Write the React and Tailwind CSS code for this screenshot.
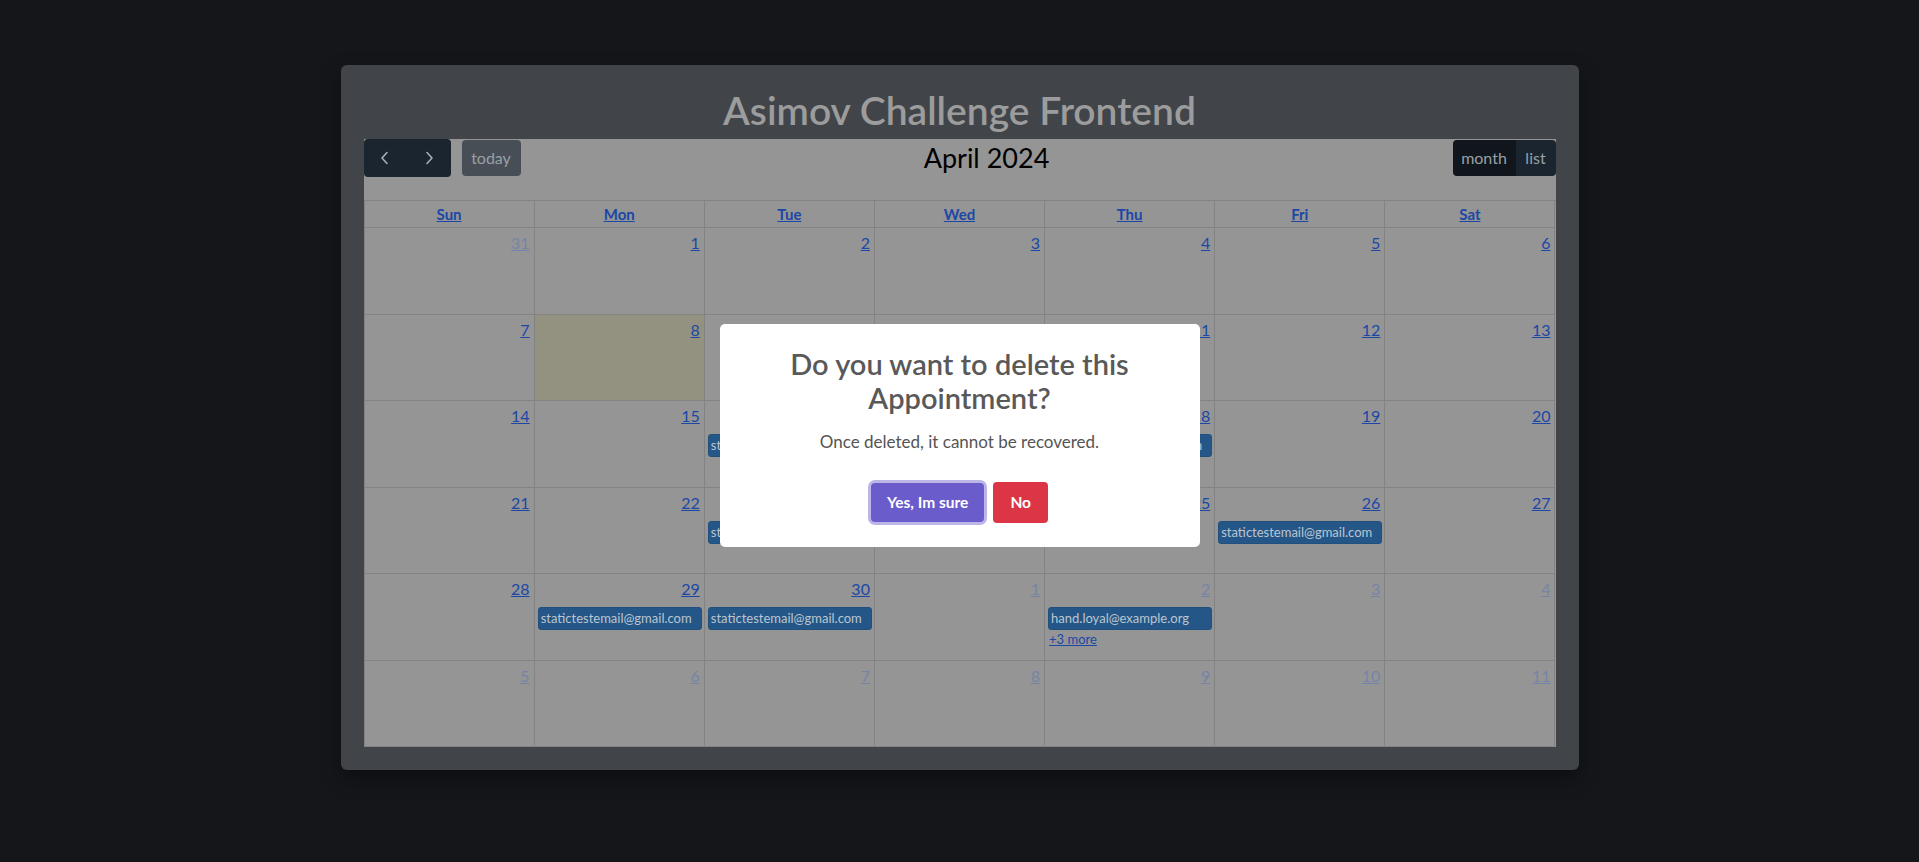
import React from "react";

const FONT = { fontFamily: "Lato, 'Noto Sans', sans-serif" };

const weeks = [
  [
    { d: 31, o: true },
    { d: 1 },
    { d: 2 },
    { d: 3 },
    { d: 4 },
    { d: 5 },
    { d: 6 },
  ],
  [
    { d: 7 },
    { d: 8, today: true },
    { d: 9 },
    { d: 10 },
    { d: 11 },
    { d: 12 },
    { d: 13 },
  ],
  [
    { d: 14 },
    { d: 15 },
    { d: 16, ev: ["statictestemail@gmail.com"] },
    { d: 17, ev: ["statictestemail@gmail.com"] },
    { d: 18, ev: ["statictestemail@gmail.com"] },
    { d: 19 },
    { d: 20 },
  ],
  [
    { d: 21 },
    { d: 22 },
    { d: 23, ev: ["statictestemail@gmail.com"] },
    { d: 24 },
    { d: 25 },
    { d: 26, ev: ["statictestemail@gmail.com"] },
    { d: 27 },
  ],
  [
    { d: 28 },
    { d: 29, ev: ["statictestemail@gmail.com"] },
    { d: 30, ev: ["statictestemail@gmail.com"] },
    { d: 1, o: true },
    { d: 2, o: true, ev: ["hand.loyal@example.org"], more: "+3 more" },
    { d: 3, o: true },
    { d: 4, o: true },
  ],
  [
    { d: 5, o: true },
    { d: 6, o: true },
    { d: 7, o: true },
    { d: 8, o: true },
    { d: 9, o: true },
    { d: 10, o: true },
    { d: 11, o: true },
  ],
];

const days = ["Sun", "Mon", "Tue", "Wed", "Thu", "Fri", "Sat"];

function Chevron({ dir }) {
  return (
    <svg width="14" height="18" viewBox="0 0 14 18" fill="none">
      {dir === "left" ? (
        <path d="M9 3.5 L4 9 L9 14.5" stroke="#a6aeb8" strokeWidth="1.6" strokeLinecap="round" strokeLinejoin="round" />
      ) : (
        <path d="M5 3.5 L10 9 L5 14.5" stroke="#a6aeb8" strokeWidth="1.6" strokeLinecap="round" strokeLinejoin="round" />
      )}
    </svg>
  );
}

export default function App() {
  return (
    <div className="relative h-[862px] w-full overflow-hidden bg-[#14161a]" style={FONT}>
      <div className="mx-auto mt-[65px] w-[1238px] rounded-md bg-[#41454a] px-[23px] pb-[23px] shadow-[0_8px_20px_rgba(0,0,0,0.35)]">
        <h1 className="pt-[21px] pb-[5px] text-center text-[39px] font-semibold leading-[48px] text-[#9c9c9c]">
          Asimov Challenge Frontend
        </h1>
        <div className="bg-[#959595]">
          <div className="flex h-[38px] items-center justify-between">
            <div className="flex items-center gap-[11px]">
              <div className="flex h-[38px] overflow-hidden rounded-[4px] bg-[#1a2530]">
                <div className="flex w-[43px] items-center justify-center">
                  <Chevron dir="left" />
                </div>
                <div className="flex w-[44px] items-center justify-center">
                  <Chevron dir="right" />
                </div>
              </div>
              <div className="flex h-[36px] w-[59px] items-center justify-center rounded-[4px] bg-[#484e56] text-[16px] text-[#9aa0a6]">
                today
              </div>
            </div>
            <div className="text-[27px] leading-[34px] text-black">April 2024</div>
            <div className="flex h-[36px] overflow-hidden rounded-[4px] text-[16px] text-[#9aa0a6]">
              <div className="flex w-[63px] items-center justify-center bg-[#11161c]">month</div>
              <div className="flex w-[40px] items-center justify-center bg-[#1a2530]">list</div>
            </div>
          </div>
          <div className="mt-[23px] border-l border-t border-[#838383]">
            <div className="grid h-[27px] grid-cols-7">
              {days.map((d) => (
                <div
                  key={d}
                  className="flex items-center justify-center border-b border-r border-[#838383] text-[15px] font-bold text-[#1b47a6] underline"
                >
                  {d}
                </div>
              ))}
            </div>
            <div className="grid h-[519px] grid-cols-7 grid-rows-6">
              {weeks.flat().map((c, i) => (
                <div
                  key={i}
                  className={`flex flex-col border-b border-r border-[#838383] ${c.today ? "bg-[#93917f]" : ""}`}
                >
                  <div className="flex justify-end px-[4px] pt-[3px] pb-[5px]">
                    <span
                      className={`text-[16px] leading-[24px] underline ${c.o ? "text-[#7584a6]" : "text-[#1b47a6]"}`}
                    >
                      {c.d}
                    </span>
                  </div>
                  {c.ev &&
                    c.ev.map((e, j) => (
                      <div
                        key={j}
                        className="ml-[3px] mr-[2px] mt-[1px] h-[23px] overflow-hidden whitespace-nowrap rounded-[3px] border border-[#21507e] bg-[#245787] px-[2px] text-[13px] leading-[21px] text-[#bcc5cf]"
                      >
                        {e}
                      </div>
                    ))}
                  {c.more && (
                    <div className="ml-[4px] mt-[1px] text-[13px] leading-[17px] text-[#1b47a6] underline">
                      {c.more}
                    </div>
                  )}
                </div>
              ))}
            </div>
          </div>
        </div>
      </div>

      <div className="absolute inset-0 flex justify-center pt-[324px]">
        <div className="h-[223px] w-[480px] rounded-[5px] bg-white text-center">
          <h2 className="px-[24px] pt-[23px] text-[29px] font-semibold leading-[34px] text-[#595959]">
            Do you want to delete this Appointment?
          </h2>
          <p className="mt-[16px] text-[17px] leading-[22px] text-[#545454]">
            Once deleted, it cannot be recovered.
          </p>
          <div className="mt-[30px] flex justify-center gap-[9px]">
            <button className="h-[39px] rounded-[4px] bg-[#6a5ccb] px-[16px] text-[15.5px] font-bold text-white shadow-[0_0_0_3px_rgba(106,92,203,0.45)]">
              Yes, Im sure
            </button>
            <button className="-mt-[1px] h-[41px] rounded-[4px] bg-[#dc3545] px-[17px] text-[15.5px] font-bold text-white">
              No
            </button>
          </div>
        </div>
      </div>
    </div>
  );
}
